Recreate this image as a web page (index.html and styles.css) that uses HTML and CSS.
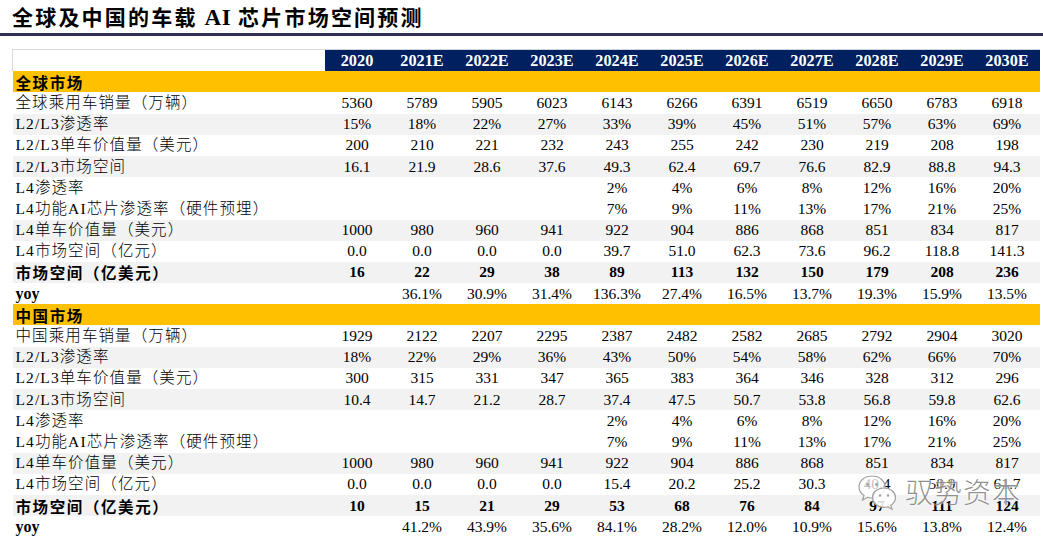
FILE: index.html
```html
<!DOCTYPE html>
<html lang="zh-CN">
<head>
<meta charset="utf-8">
<link rel="stylesheet" href="styles.css">
</head>
<body>
<div class="page">
  <h1 class="title">全球及中国的车载 <span class="latin">AI</span> 芯片市场空间预测</h1>
  <div class="rule"></div>
  <table class="grid">
    <colgroup>
      <col class="c-label">
      <col class="c-year"><col class="c-year"><col class="c-year"><col class="c-year"><col class="c-year"><col class="c-year">
      <col class="c-year"><col class="c-year"><col class="c-year"><col class="c-year"><col class="c-year">
    </colgroup>
    <thead>
      <tr class="head">
        <th class="corner"></th>
        <th>2020</th><th>2021E</th><th>2022E</th><th>2023E</th><th>2024E</th><th>2025E</th><th>2026E</th><th>2027E</th><th>2028E</th><th>2029E</th><th>2030E</th>
      </tr>
    </thead>
    <tbody>
      <tr class="section"><td colspan="12">全球市场</td></tr>
      <tr><td class="lbl">全球乘用车销量（万辆）</td><td>5360</td><td>5789</td><td>5905</td><td>6023</td><td>6143</td><td>6266</td><td>6391</td><td>6519</td><td>6650</td><td>6783</td><td>6918</td></tr>
      <tr class="alt"><td class="lbl">L2/L3渗透率</td><td>15%</td><td>18%</td><td>22%</td><td>27%</td><td>33%</td><td>39%</td><td>45%</td><td>51%</td><td>57%</td><td>63%</td><td>69%</td></tr>
      <tr><td class="lbl">L2/L3单车价值量（美元）</td><td>200</td><td>210</td><td>221</td><td>232</td><td>243</td><td>255</td><td>242</td><td>230</td><td>219</td><td>208</td><td>198</td></tr>
      <tr class="alt"><td class="lbl">L2/L3市场空间</td><td>16.1</td><td>21.9</td><td>28.6</td><td>37.6</td><td>49.3</td><td>62.4</td><td>69.7</td><td>76.6</td><td>82.9</td><td>88.8</td><td>94.3</td></tr>
      <tr><td class="lbl">L4渗透率</td><td></td><td></td><td></td><td></td><td>2%</td><td>4%</td><td>6%</td><td>8%</td><td>12%</td><td>16%</td><td>20%</td></tr>
      <tr><td class="lbl">L4功能AI芯片渗透率（硬件预埋）</td><td></td><td></td><td></td><td></td><td>7%</td><td>9%</td><td>11%</td><td>13%</td><td>17%</td><td>21%</td><td>25%</td></tr>
      <tr class="alt"><td class="lbl">L4单车价值量（美元）</td><td>1000</td><td>980</td><td>960</td><td>941</td><td>922</td><td>904</td><td>886</td><td>868</td><td>851</td><td>834</td><td>817</td></tr>
      <tr><td class="lbl">L4市场空间（亿元）</td><td>0.0</td><td>0.0</td><td>0.0</td><td>0.0</td><td>39.7</td><td>51.0</td><td>62.3</td><td>73.6</td><td>96.2</td><td>118.8</td><td>141.3</td></tr>
      <tr class="alt total"><td class="lbl">市场空间（亿美元）</td><td>16</td><td>22</td><td>29</td><td>38</td><td>89</td><td>113</td><td>132</td><td>150</td><td>179</td><td>208</td><td>236</td></tr>
      <tr class="yoy"><td class="lbl">yoy</td><td></td><td>36.1%</td><td>30.9%</td><td>31.4%</td><td>136.3%</td><td>27.4%</td><td>16.5%</td><td>13.7%</td><td>19.3%</td><td>15.9%</td><td>13.5%</td></tr>

      <tr class="section"><td colspan="12">中国市场</td></tr>
      <tr><td class="lbl">中国乘用车销量（万辆）</td><td>1929</td><td>2122</td><td>2207</td><td>2295</td><td>2387</td><td>2482</td><td>2582</td><td>2685</td><td>2792</td><td>2904</td><td>3020</td></tr>
      <tr class="alt"><td class="lbl">L2/L3渗透率</td><td>18%</td><td>22%</td><td>29%</td><td>36%</td><td>43%</td><td>50%</td><td>54%</td><td>58%</td><td>62%</td><td>66%</td><td>70%</td></tr>
      <tr><td class="lbl">L2/L3单车价值量（美元）</td><td>300</td><td>315</td><td>331</td><td>347</td><td>365</td><td>383</td><td>364</td><td>346</td><td>328</td><td>312</td><td>296</td></tr>
      <tr class="alt"><td class="lbl">L2/L3市场空间</td><td>10.4</td><td>14.7</td><td>21.2</td><td>28.7</td><td>37.4</td><td>47.5</td><td>50.7</td><td>53.8</td><td>56.8</td><td>59.8</td><td>62.6</td></tr>
      <tr><td class="lbl">L4渗透率</td><td></td><td></td><td></td><td></td><td>2%</td><td>4%</td><td>6%</td><td>8%</td><td>12%</td><td>16%</td><td>20%</td></tr>
      <tr><td class="lbl">L4功能AI芯片渗透率（硬件预埋）</td><td></td><td></td><td></td><td></td><td>7%</td><td>9%</td><td>11%</td><td>13%</td><td>17%</td><td>21%</td><td>25%</td></tr>
      <tr class="alt"><td class="lbl">L4单车价值量（美元）</td><td>1000</td><td>980</td><td>960</td><td>941</td><td>922</td><td>904</td><td>886</td><td>868</td><td>851</td><td>834</td><td>817</td></tr>
      <tr><td class="lbl">L4市场空间（亿元）</td><td>0.0</td><td>0.0</td><td>0.0</td><td>0.0</td><td>15.4</td><td>20.2</td><td>25.2</td><td>30.3</td><td>40.4</td><td>50.9</td><td>61.7</td></tr>
      <tr class="alt total"><td class="lbl">市场空间（亿美元）</td><td>10</td><td>15</td><td>21</td><td>29</td><td>53</td><td>68</td><td>76</td><td>84</td><td>97</td><td>111</td><td>124</td></tr>
      <tr class="yoy"><td class="lbl">yoy</td><td></td><td>41.2%</td><td>43.9%</td><td>35.6%</td><td>84.1%</td><td>28.2%</td><td>12.0%</td><td>10.9%</td><td>15.6%</td><td>13.8%</td><td>12.4%</td></tr>
    </tbody>
  </table>

  <div class="watermark">
    <svg class="wm-icon" viewBox="0 0 40 42" width="40" height="42">
      <path d="M15 3 C7.5 3 2 8 2 14 C2 17.5 4 20.5 7 22.5 L5.5 27 L10.5 24.3 C12 24.8 13.5 25 15 25 C22.5 25 28 20 28 14 C28 8 22.5 3 15 3 Z" fill="rgba(255,255,255,0.75)" stroke="#a0a0a0" stroke-width="1.2"/>
      <circle cx="10.5" cy="11.5" r="1.4" fill="#a0a0a0"/>
      <circle cx="19.5" cy="11.5" r="1.4" fill="#a0a0a0"/>
      <path d="M27 15 C20.5 15 15.5 19.3 15.5 24.7 C15.5 30 20.5 34.3 27 34.3 C28.3 34.3 29.5 34.1 30.7 33.7 L35 36.2 L33.8 32.2 C36.6 30.4 38.5 27.7 38.5 24.7 C38.5 19.3 33.5 15 27 15 Z" fill="rgba(255,255,255,0.85)" stroke="#a0a0a0" stroke-width="1.2"/>
      <circle cx="23" cy="22.5" r="1.2" fill="#a0a0a0"/>
      <circle cx="31" cy="22.5" r="1.2" fill="#a0a0a0"/>
    </svg>
    <span class="wm-text">驭势资本</span>
  </div>
</div>
</body>
</html>
```

FILE: styles.css
```css
html, body {
  margin: 0;
  padding: 0;
  background: #ffffff;
}

.page {
  position: relative;
  width: 1043px;
  height: 537px;
  overflow: hidden;
}

.title {
  margin: 0;
  padding: 3px 0 0 12px;
  height: 30px;
  box-sizing: border-box;
  font-family: "Noto Sans CJK SC", "Liberation Serif", serif;
  font-weight: 700;
  font-size: 21px;
  line-height: 26px;
  letter-spacing: 2.2px;
  color: #000;
}

.title .latin {
  font-family: "Liberation Serif", serif;
  font-size: 23px;
  letter-spacing: 0.5px;
}

.rule {
  height: 3px;
  margin-top: 3px;
  background: #2f2f5c;
}

.grid {
  margin: 13px 0 0 12px;
  border-collapse: collapse;
  table-layout: fixed;
  width: 1027px;
  font-family: "Liberation Serif", "Noto Sans CJK SC", serif;
  font-size: 15.5px;
  color: #000;
}

.c-label { width: 312px; }
.c-year { width: 65px; }

.grid th,
.grid td {
  padding: 0;
  height: 21.2px;
  line-height: 20px;
  text-align: center;
  white-space: nowrap;
  overflow: visible;
}

.head th {
  background: #002060;
  color: #ffffff;
  font-weight: 700;
  font-size: 16.3px;
  border-top: 1px solid #d0d5de;
}

.head th.corner {
  background: #ffffff;
  border-left: 1px solid #d9d9d9;
  border-top: 1px solid #d9d9d9;
}

.section td {
  background: #ffc000;
  text-align: left;
  padding-left: 3px;
  font-family: "Noto Sans CJK SC", sans-serif;
  font-weight: 700;
  letter-spacing: 1.6px;
}

.grid td.lbl {
  text-align: left;
  padding-left: 3px;
  letter-spacing: 1.1px;
  font-weight: 300;
}

.alt td {
  background: #f2f2f2;
}

.total td {
  font-weight: 700;
}

.grid .total td.lbl {
  font-family: "Noto Sans CJK SC", sans-serif;
  font-weight: 700;
  letter-spacing: 1.6px;
}

.grid .yoy td.lbl {
  font-weight: 700;
  font-size: 16px;
  letter-spacing: 0;
}

.watermark {
  position: absolute;
  left: 857px;
  top: 473px;
  display: flex;
  align-items: center;
  gap: 8px;
}

.wm-icon {
  display: block;
}

.wm-text {
  font-family: "Noto Sans CJK SC", sans-serif;
  font-weight: 300;
  font-size: 28px;
  line-height: 30px;
  letter-spacing: 1px;
  color: rgba(115, 115, 115, 0.8);
  text-shadow: 0 0 2px #fff, 0 0 2px #fff;
  margin-top: -6px;
}
```
